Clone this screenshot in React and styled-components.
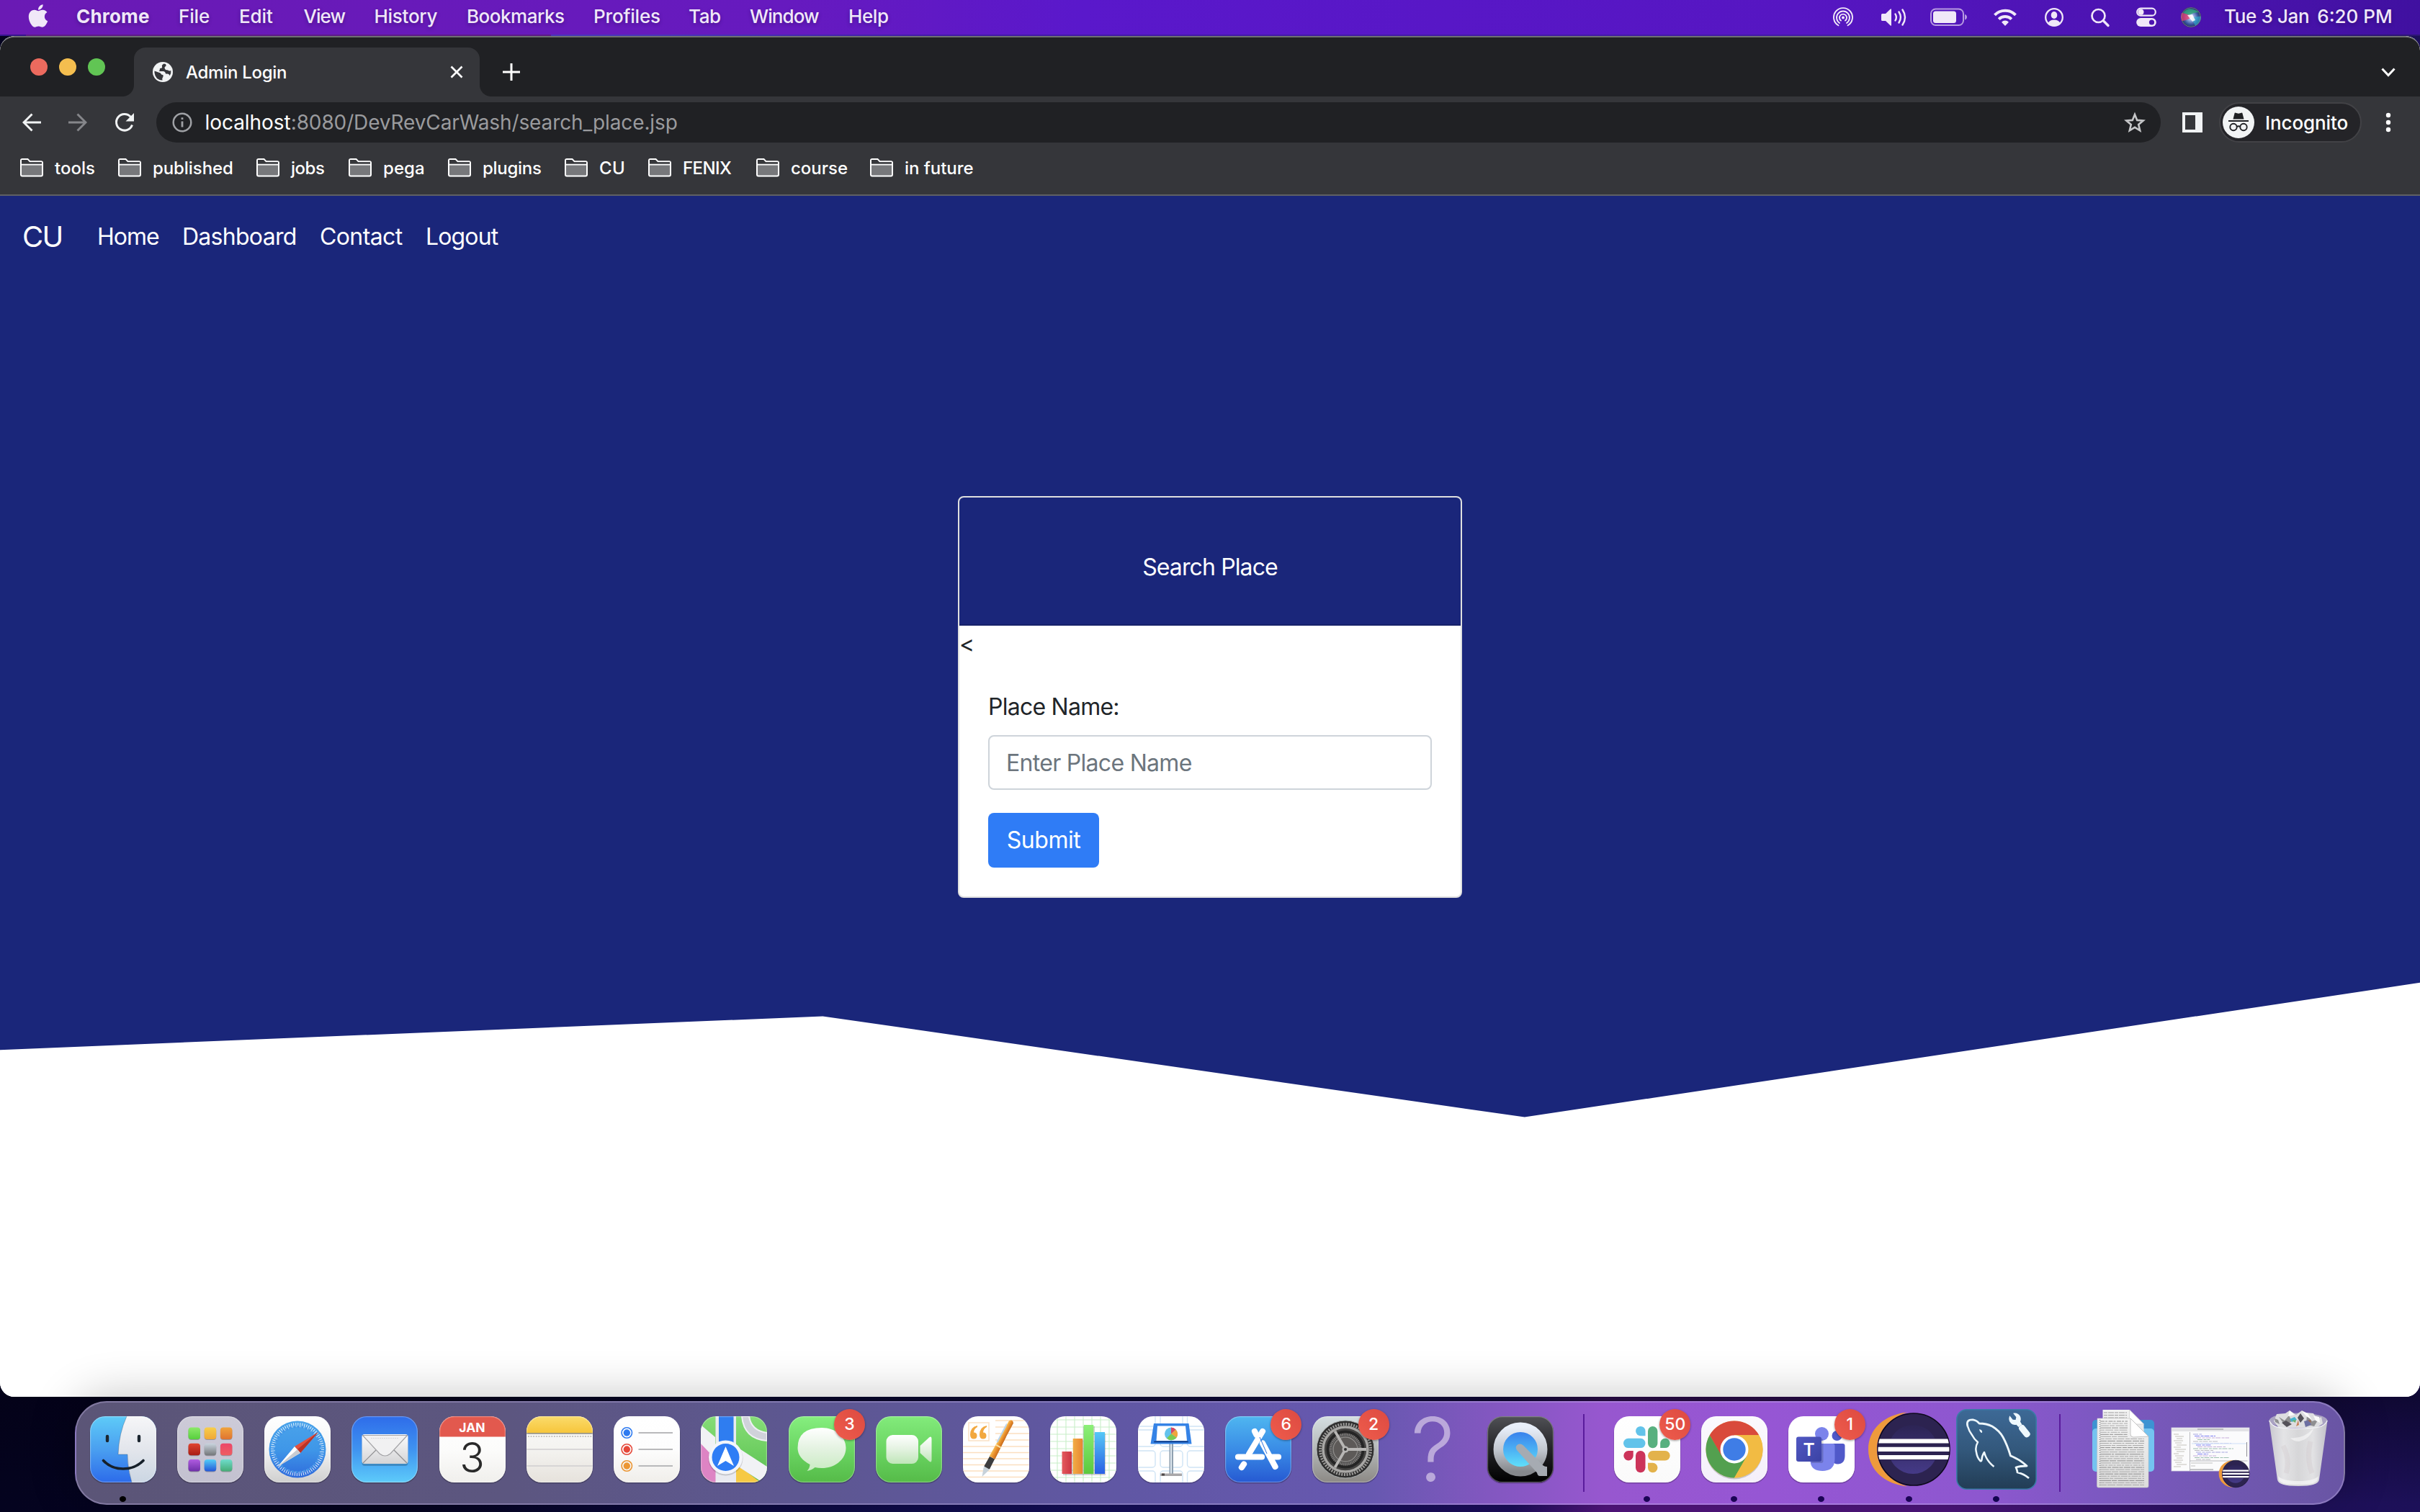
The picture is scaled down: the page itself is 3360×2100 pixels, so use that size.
import React from "react";
import styled, { createGlobalStyle } from "styled-components";
import { FaApple } from "react-icons/fa";

const GlobalStyle = createGlobalStyle`
  *, *::before, *::after { box-sizing: border-box; }
  html, body { margin: 0; padding: 0; }
  body {
    width: 3360px;
    height: 2100px;
    overflow: hidden;
    font-family: Inter, "Liberation Sans", sans-serif;
  }
`;

/* ---------- desktop ---------- */

const Desktop = styled.div`
  width: 3360px;
  height: 2100px;
  display: flex;
  flex-direction: column;
  background:
    linear-gradient(180deg, rgba(0, 0, 0, 0) 1890px, rgba(4, 2, 20, 0.55) 1940px, rgba(4, 2, 20, 0) 2090px),
    linear-gradient(90deg, #04031f 0, #05041f 560px, #0a0838 900px, #140f58 1500px, #1c0e5c 2100px, #53157f 2230px, #4d157c 2700px, #34126c 2950px, #1f105a 3200px, #1c1058 100%);
`;

const Text = styled.span`
  white-space: pre;
  letter-spacing: ${(p) => p.$ls || 0}px;
`;

/* ---------- menu bar ---------- */

const MenuBar = styled.header`
  height: 48px;
  flex: none;
  display: flex;
  justify-content: space-between;
  color: #f0e8f8;
  font-size: 26px;
  font-weight: 500;
  line-height: 45px;
  background: linear-gradient(90deg, #6a1ab4 0, #661abf 1100px, #5a18cb 1500px, #5616c2 2500px, #4612a8 3200px, #4010a0 100%);
  text-shadow: 0 2px 5px rgba(20, 0, 60, 0.35);
`;

const MenuGroup = styled.div`
  display: flex;
`;

const AppleSlot = styled.div`
  width: 106px;
  padding: 4px 0 0 35px;
  font-size: 36px;
  line-height: 0;
`;

const MenuItem = styled.div`
  width: ${(p) => p.$w}px;
  font-weight: ${(p) => (p.$strong ? 700 : 500)};
`;

const StatusItem = styled.div`
  width: ${(p) => p.$w}px;
  height: 48px;
  display: flex;
  align-items: center;
`;

const ClockItem = styled.div`
  width: 272px;
  display: flex;
  gap: 11px;
`;

const WindowGap = styled.div`
  height: 2px;
  flex: none;
  background: linear-gradient(90deg, #35158a 0 36px, #5d1c86 36px 765px, #4a35b8 765px 900px, #431aa6 1300px 2600px, #2c1672 100%);
`;

/* ---------- browser ---------- */

const BrowserWindow = styled.main`
  height: 1890px;
  flex: none;
  display: flex;
  flex-direction: column;
  border-radius: 20px;
  overflow: hidden;
  background: #fff;
`;

const TabStrip = styled.div`
  height: 84px;
  flex: none;
  display: flex;
  align-items: flex-end;
  border-top: 2px solid #6f7073;
  border-radius: 20px 20px 0 0;
  background: #202124;
`;

const TrafficLights = styled.div`
  width: 186px;
  height: 84px;
  padding: 31px 0 0 42px;
  display: flex;
  gap: 16px;
`;

const Light = styled.span`
  width: 24px;
  height: 24px;
  border-radius: 50%;
  background: ${(p) => p.$c};
`;

const Tab = styled.div`
  position: relative;
  width: 480px;
  height: 68px;
  padding: 0 22px 0 26px;
  display: flex;
  align-items: center;
  border-radius: 16px 16px 0 0;
  background: #35363a;
  color: #fff;
  font-size: 24px;

  &::before,
  &::after {
    content: "";
    position: absolute;
    bottom: 0;
    width: 16px;
    height: 16px;
  }
  &::before {
    left: -16px;
    background: radial-gradient(circle at 0 0, transparent 15.5px, #35363a 16.5px);
  }
  &::after {
    right: -16px;
    background: radial-gradient(circle at 100% 0, transparent 15.5px, #35363a 16.5px);
  }
`;

const TabTitle = styled.div`
  flex: 1;
  padding-left: 18px;
  font-weight: 500;
`;

const NewTab = styled.div`
  height: 68px;
  padding-left: 32px;
  flex: 1;
  display: flex;
  align-items: center;
`;

const TabSearch = styled.div`
  width: 54px;
  height: 68px;
  display: flex;
  align-items: center;
`;

const Toolbar = styled.div`
  height: 72px;
  flex: none;
  padding-top: 8px;
  display: flex;
  align-items: flex-start;
  background: #35363a;
  color: #fff;
`;

const NavButton = styled.div`
  width: ${(p) => p.$w}px;
  height: 56px;
  padding-left: ${(p) => p.$inset || 0}px;
  display: flex;
  align-items: center;
`;

const Omnibox = styled.div`
  width: 2783px;
  height: 56px;
  padding: 0 21px 0 22px;
  display: flex;
  align-items: center;
  border-radius: 28px;
  background: #202124;
  font-size: 28px;
`;

const Url = styled.div`
  flex: 1;
  padding-left: 17.5px;
  color: #9a9b9e;
`;

const Host = styled(Text)`
  color: #fff;
`;

const SidePanelSlot = styled.div`
  width: 81px;
  height: 56px;
  padding-left: 30px;
  display: flex;
  align-items: center;
`;

const IncognitoPill = styled.div`
  width: 198px;
  height: 56px;
  padding-left: 3px;
  display: flex;
  align-items: center;
  gap: 15px;
  border: 2px solid #424246;
  border-radius: 28px;
  background: #242428;
  font-size: 26px;
  font-weight: 500;
`;

const MoreSlot = styled.div`
  height: 56px;
  padding-left: 33px;
  display: flex;
  align-items: center;
`;

const BookmarksBar = styled.div`
  height: 66px;
  flex: none;
  padding: 0 0 10px 28px;
  display: flex;
  align-items: center;
  border-bottom: 2px solid #5f6064;
  background: #35363a;
  color: #fff;
  font-size: 24px;
  font-weight: 500;
`;

const Bookmark = styled.div`
  width: ${(p) => p.$w}px;
  display: flex;
  align-items: center;
  gap: 16px;
`;

/* ---------- page ---------- */

const Page = styled.div`
  flex: 1;
  background: #fff;
  font-size: 32px;
  font-weight: 430;
  line-height: 48px;
  color: #212529;
`;

const NavBar = styled.nav`
  height: 112px;
  padding: 2px 0 0 31px;
  display: flex;
  align-items: center;
  background: #1a267a;
  color: #fff;
`;

const Brand = styled.div`
  width: 104px;
  font-size: 40px;
`;

const NavLink = styled.div`
  width: ${(p) => p.$w}px;
`;

const Hero = styled.section`
  height: 1167.6px;
  display: flex;
  align-items: center;
  justify-content: center;
  background: #1a267a;
  clip-path: polygon(0 0, 100% 0, 100% 84%, 63% 100%, 34% 88%, 0 92%);
`;

const Card = styled.div`
  width: 700px;
  height: 558px;
  border: 2px solid #dfdfdf;
  border-radius: 8px;
  background: #fff;
  overflow: hidden;
`;

const CardHeader = styled.div`
  height: 178px;
  padding-top: 73px;
  border-bottom: 2px solid #172269;
  background: #1a267a;
  color: #fff;
  text-align: center;
`;

const Stray = styled.div`
  height: 48px;
  padding-top: 2px;
`;

const CardBody = styled.div`
  padding: 40px;
`;

const Label = styled.label`
  display: block;
  padding-top: 1px;
  margin-bottom: 15px;
`;

const Field = styled.div`
  height: 76px;
  padding: 13px 23px;
  border: 2px solid #ced4da;
  border-radius: 8px;
  color: #6c757d;
`;

const SubmitButton = styled.button`
  display: block;
  width: 154px;
  height: 76px;
  margin-top: 32px;
  padding: 1px 0 0;
  border: 0;
  border-radius: 8px;
  background: #2f7cf6;
  color: #fff;
  font: inherit;
`;

/* ---------- dock ---------- */

const DockBar = styled.footer`
  width: 3152px;
  height: 144px;
  flex: none;
  margin: 6px 0 0 104px;
  padding-left: 4px;
  display: flex;
  border: 2px solid rgba(205, 190, 240, 0.34);
  border-radius: 44px;
  background:
    linear-gradient(90deg, #5b5577 0, #5c5680 600px, #5d5791 1000px, #6057a4 1450px, #6758b0 1800px, #8257c0 1960px, #9757cf 2120px, #9656d4 2350px, #8d57cf 2650px, #7d58c2 2800px, #7057b0 3000px, #6955a4 100%);
  box-shadow: 0 -6px 64px rgba(0, 0, 0, 0.24);
`;

const Tile = styled.div`
  position: relative;
  width: 121.25px;
  height: 130px;
  padding-top: ${(p) => Math.max(p.$dy || 0, 0) * 2}px;
  padding-bottom: ${(p) => Math.max(-(p.$dy || 0), 0) * 2}px;
  flex: none;
  display: flex;
  align-items: center;
  justify-content: center;

  svg { overflow: visible; flex: none; }
`;

const RunningDot = styled.span`
  position: absolute;
  left: 55.5px;
  bottom: -8px;
  width: 9px;
  height: 8px;
  border-radius: 50%;
  background: ${(p) => p.$c};
`;

const Badge = styled.span`
  position: absolute;
  left: 78px;
  top: 9px;
  width: 43px;
  height: 43px;
  border-radius: 50%;
  background: linear-gradient(45deg, #ee5c4c, #dd4a41);
  box-shadow: 0 1px 3px rgba(0, 0, 0, 0.4);
  color: #fff;
  font-size: 23px;
  font-weight: 500;
  line-height: 43px;
  text-align: center;
`;

const Missing = styled.span`
  color: rgba(214, 200, 232, 0.72);
  font-size: 122px;
  font-weight: 300;
  line-height: 130px;
`;

const Separator = styled.div`
  width: 55px;
  height: 108px;
  margin-top: 16px;
  flex: none;
  display: flex;
  justify-content: center;

  &::before {
    content: "";
    width: 2px;
    height: 108px;
    background: #5a1c9c;
  }
`;

/* ---------- status icons ---------- */

const AirDrop = () => (
  <svg width="28" height="28" viewBox="0 0 28 28" fill="none" stroke="#f0e8f8" strokeWidth="1.9" strokeLinecap="round">
    <circle cx="14" cy="14.5" r="2" fill="#f0e8f8" stroke="none" />
    <path d="M11 18.6a5 5 0 1 1 6 0" />
    <path d="M9 22a9 9 0 1 1 10 0" />
    <path d="M7.4 25.3a13 13 0 1 1 13.2 0" />
  </svg>
);

const Volume = () => (
  <svg width="38" height="28" viewBox="0 0 38 28" fill="none" stroke="#f0e8f8" strokeWidth="2.4" strokeLinecap="round">
    <path d="M1 10.5q0-1.5 1.5-1.5H7l6.5-6.2q1.5-1.3 1.5.7v21q0 2-1.5.7L7 19H2.5Q1 19 1 17.5z" fill="#f0e8f8" stroke="none" />
    <path d="M20.5 9.5q2.7 4.500 0 9M25.5 6.500q4.800 7.500 0 15M30.500 3.500q7 10.500 0 21" />
  </svg>
);

const Battery = () => (
  <svg width="52" height="26" viewBox="0 0 52 26">
    <rect x="1" y="1.5" width="45" height="22.5" rx="6.5" fill="none" stroke="#b79be0" strokeWidth="2" />
    <rect x="4" y="4.5" width="32" height="16.5" rx="3.5" fill="#f0e8f8" />
    <path d="M48 9q3 1 3 3.8t-3 3.8z" fill="#b79be0" />
  </svg>
);

const Wifi = () => (
  <svg width="34" height="26" viewBox="0 0 34 26" fill="none" stroke="#f0e8f8" strokeWidth="4">
    <path d="M2.5 9.8a20.5 20.5 0 0 1 29 0" />
    <path d="M8.2 15.6a12.5 12.5 0 0 1 17.6 0" />
    <path d="M12 19.7a7 7 0 0 1 10 0L17 25z" fill="#f0e8f8" stroke="none" />
  </svg>
);

const UserCircle = () => (
  <svg width="28" height="28" viewBox="0 0 28 28">
    <circle cx="14" cy="14" r="11.8" fill="none" stroke="#f0e8f8" strokeWidth="2.3" />
    <ellipse cx="14" cy="11" rx="4.3" ry="5" fill="#f0e8f8" />
    <path d="M5.8 22q1.7-4.5 8.2-4.5t8.2 4.5A11.5 11.5 0 0 1 5.8 22z" fill="#f0e8f8" />
  </svg>
);

const Search = () => (
  <svg width="27" height="27" viewBox="0 0 27 27" fill="none" stroke="#f0e8f8" strokeWidth="2.7" strokeLinecap="round">
    <circle cx="10.5" cy="11" r="9" />
    <path d="M17.300 17.800L24 24.500" strokeWidth="3.4" />
  </svg>
);

const ControlCenter = () => (
  <svg width="30" height="28" viewBox="0 0 30 28">
    <rect x="2.2" y="1.7" width="25.6" height="10" rx="5" fill="none" stroke="#f0e8f8" strokeWidth="2.2" />
    <circle cx="7.5" cy="6.7" r="4" fill="#f0e8f8" />
    <rect x="1.2" y="15" width="27.6" height="12" rx="6" fill="#f0e8f8" />
    <circle cx="22.5" cy="21" r="3.6" fill="#4c13b0" />
  </svg>
);

const Siri = () => (
  <svg width="30" height="30" viewBox="0 0 30 30">
    <defs>
      <radialGradient id="siri" cx="50%" cy="50%" r="55%">
        <stop offset="0" stopColor="#fff" /><stop offset=".25" stopColor="#9fb4e6" />
        <stop offset=".65" stopColor="#33509c" /><stop offset="1" stopColor="#2a2d3a" />
      </radialGradient>
      <clipPath id="siri-c"><circle cx="15" cy="15" r="14" /></clipPath>
    </defs>
    <circle cx="15" cy="15" r="14" fill="url(#siri)" />
    <g clipPath="url(#siri-c)">
      <path d="M0 9Q10 8 16 15 8 20 2 20z" fill="#e8396e" opacity=".75" />
      <path d="M4 9Q12 -2 26 8 18 8 13 12z" fill="#2fa877" opacity=".8" />
      <path d="M16 16q8-3 14-2-1 8-9 13z" fill="#2fb3d0" opacity=".6" />
      <path d="M10 12l7-1 4 8-4 2z" fill="#fff" opacity=".85" />
    </g>
    <circle cx="15" cy="15" r="13.4" fill="none" stroke="#8a8fa0" strokeOpacity=".6" />
  </svg>
);

/* ---------- browser icons ---------- */

const Globe = () => (
  <svg width="28" height="28" viewBox="0 0 28 28">
    <circle cx="14" cy="14" r="14" fill="#f1f3f4" />
    <path d="M2.5 12.5L8 14.500q3 .5 3.500 2t3 1.500v2.500q-1.500 1.500-1 5Q3.500 25 2.500 15zM15.500 2.600Q12 4.500 13 6.500t-3 2.500q0 3-1.500 4h6q3 0 3.500 3.500h2.500q2.500 0 3 2.800Q26 15.500 25.300 12q-2.500 1.200-4-.5-4 0-4.600-2.500t1.600-3q.7-1.700-.3-3z" fill="#35363a" />
  </svg>
);

const Close = () => (
  <svg width="20" height="20" viewBox="0 0 20 20" stroke="#fff" strokeWidth="2.7"><path d="M2.500 2.500l15 15M17.500 2.500l-15 15" /></svg>
);

const Plus = () => (
  <svg width="24" height="24" viewBox="0 0 24 24" stroke="#fff" strokeWidth="3"><path d="M12 0v24M0 12h24" /></svg>
);

const Chevron = () => (
  <svg width="20" height="13" viewBox="0 0 20 13" fill="none" stroke="#fff" strokeWidth="3"><path d="M1.500 1.500L10 10.500l8.500-9" /></svg>
);

const ArrowLeft = () => (
  <svg width="26" height="26" viewBox="0 0 26 26" fill="none" stroke="#f1f3f4" strokeWidth="2.9"><path d="M26 13H2.500M13.500 1.500L2 13l11.500 11.500" /></svg>
);

const ArrowRight = () => (
  <svg width="26" height="26" viewBox="0 0 26 26" fill="none" stroke="#85868a" strokeWidth="2.9"><path d="M0 13h23.500M12.500 1.500L24 13 12.500 24.500" /></svg>
);

const Reload = () => (
  <svg width="28" height="28" viewBox="0 0 28 28" fill="none" stroke="#f1f3f4" strokeWidth="3">
    <path d="M24.500 17.500A11.300 11.300 0 1 1 22.300 6.300" /><path d="M27 1v11.500H15.500z" fill="#f1f3f4" stroke="none" />
  </svg>
);

const Info = () => (
  <svg width="28" height="28" viewBox="0 0 28 28" fill="none" stroke="#9fa1a5" strokeWidth="2.5">
    <circle cx="14" cy="14" r="12.3" /><path d="M14 12.500v8M14 7.200v2.800" strokeWidth="2.8" />
  </svg>
);

const Star = () => (
  <svg width="30" height="30" viewBox="0 0 30 30" fill="none" stroke="#c6c7c9" strokeWidth="2.6">
    <path d="M15 4l3.200 7.900 8.500.6-6.500 5.500 2 8.300L15 21.800l-7.200 4.500 2-8.300-6.500-5.500 8.500-.6z" />
  </svg>
);

const SidePanel = () => (
  <svg width="28" height="28" viewBox="0 0 28 28"><path d="M0 0h28v28H0zM4 4v20h14V4z" fill="#f1f3f4" fillRule="evenodd" /></svg>
);

const IncognitoIcon = () => (
  <svg width="44" height="44" viewBox="0 0 44 44">
    <circle cx="22" cy="22" r="22" fill="#f1f3f4" />
    <path d="M14.500 17.500l2-8q.3-1.200 1.500-.8l4 1 4-1q1.200-.4 1.500.8l2 8zM8 19h28v1.900H8z" fill="#202124" />
    <g fill="none" stroke="#202124" strokeWidth="1.9"><circle cx="15" cy="28.500" r="4.700" /><circle cx="29" cy="28.500" r="4.700" /><path d="M19.700 28q2.300-1.500 4.600 0" /></g>
  </svg>
);

const Dots = () => (
  <svg width="8" height="28" viewBox="0 0 8 28" fill="#fff"><circle cx="4" cy="4" r="3.200" /><circle cx="4" cy="14" r="3.200" /><circle cx="4" cy="24" r="3.200" /></svg>
);

const Folder = () => (
  <svg width="32" height="26" viewBox="0 0 32 26">
    <path d="M1 22.500V3Q1 1 3 1h7.500l3 3.200H29q2 0 2 2v16.300q0 2-2 2H3q-2 0-2-2z" fill="#77787b" stroke="#fff" strokeWidth="2" />
    <path d="M2 2h8l3 3.200h17v2.600H2z" fill="#35363a" /><path d="M1 8.600h30" stroke="#fff" strokeWidth="1.800" />
  </svg>
);

/* ---------- dock icons (92 unit squares) ---------- */

const Grad = ({ id, stops, x2 = 0, y2 = 1 }) => (
  <linearGradient id={id} x1="0" y1="0" x2={x2} y2={y2}>
    {stops.map((c, i) => <stop key={i} offset={i / (stops.length - 1)} stopColor={c} />)}
  </linearGradient>
);

const AppIcon = ({ id, stops, children }) => (
  <svg width="92" height="92" viewBox="0 0 92 92">
    <defs>
      <Grad id={`${id}-bg`} stops={stops} />
      <clipPath id={`${id}-clip`}><rect width="92" height="92" rx="21" /></clipPath>
    </defs>
    <rect y="1.5" x="-.5" width="93" height="92" rx="21" fill="#000" opacity=".22" />
    <g clipPath={`url(#${id}-clip)`}>
      <rect width="92" height="92" fill={`url(#${id}-bg)`} />
      {children}
    </g>
    <rect x=".6" y=".6" width="90.8" height="90.8" rx="20.5" fill="none" stroke="#fff" strokeOpacity=".28" strokeWidth="1.2" />
  </svg>
);

const Finder = () => (
  <AppIcon id="finder" stops={["#5ecbf8", "#4a9ff0", "#2c6bea"]}>
    <defs><Grad id="finder-r" stops={["#f6f6f8", "#e3e6ec", "#cbd6e3"]} /></defs>
    <path d="M51 0Q40 24 39 53h13q0 20 6 39h34V0z" fill="url(#finder-r)" />
    <path d="M51 0Q40 24 39 53h13q0 20 6 39" fill="none" stroke="#33506c" strokeOpacity=".35" />
    <path d="M24 28v6M68 28v6" stroke="#1c2630" strokeWidth="4.4" strokeLinecap="round" />
    <path d="M18.500 61.500Q29 73 46 73t28-11.500" fill="none" stroke="#16202a" strokeWidth="3.6" strokeLinecap="round" />
  </AppIcon>
);

const padColors = [
  ["#8ce96a", "#57cf3d"], ["#f7ce4b", "#f0a838"], ["#f0a33c", "#df7430"],
  ["#e0442f", "#a81d15"], ["#c9d4de", "#737679"], ["#ec4668", "#ee5d62"],
  ["#b05ce0", "#6d2fa8"], ["#54cdf7", "#2356d8"], ["#6fdccb", "#46ab76"],
];

const Launchpad = () => (
  <AppIcon id="pad" stops={["#cdcbd8", "#c3c1d0"]}>
    <defs>{padColors.map((c, i) => <Grad key={i} id={`pad${i}`} stops={c} />)}</defs>
    {padColors.map((c, i) => (
      <g key={i}>
        <rect x={15.5 + (i % 3) * 22.2} y={16.5 + Math.floor(i / 3) * 22.3} width="16.5" height="16.5" rx="4" fill="#000" opacity=".25" />
        <rect x={15.5 + (i % 3) * 22.2} y={15.5 + Math.floor(i / 3) * 22.3} width="16.5" height="16.5" rx="4" fill={`url(#pad${i})`} />
      </g>
    ))}
  </AppIcon>
);

const Safari = () => (
  <AppIcon id="safari" stops={["#ffffff", "#f4f4f4", "#cfcfcf"]}>
    <defs><Grad id="safari-d" stops={["#4aa3ea", "#3f97e8", "#2f6bdc"]} /></defs>
    <circle cx="46" cy="46" r="39.5" fill="url(#safari-d)" />
    <circle cx="46" cy="46" r="34" fill="none" stroke="#fff" strokeOpacity=".8" strokeWidth="6" strokeDasharray="1.060 1.907" />
    <circle cx="46" cy="46" r="31.5" fill="none" stroke="#3f93e6" strokeWidth="3" strokeDasharray="2.800 2.697" />
    <path d="M75 22L50 51l-8-9z" fill="#e2503f" /><path d="M75 22L50 51l-4-5z" fill="#b93327" />
    <path d="M18.500 70L42 42l8 9z" fill="#fff" /><path d="M18.500 70L46 46l4 5z" fill="#c9ccd1" />
  </AppIcon>
);

const Mail = () => (
  <AppIcon id="mail" stops={["#2e6cea", "#3f93f0", "#5dcbfa"]}>
    <defs><Grad id="mail-e" stops={["#fdfdfd", "#d4d4d6"]} /></defs>
    <rect x="14.5" y="28" width="64" height="41" rx="4" fill="#000" opacity=".2" />
    <rect x="14.5" y="25" width="64" height="41" rx="3.5" fill="url(#mail-e)" />
    <path d="M16 65l18-18M77 65L59 47" stroke="#8f8f92" strokeWidth="1.2" />
    <path d="M15.500 26.500L39 52q7.500 6 15 0l23.500-25.500z" fill="#f1f1f2" stroke="#a3a3a6" strokeWidth="1.2" />
    <path d="M27 30.500h38" stroke="#d8d8da" strokeDasharray="2 1" />
  </AppIcon>
);

const IconText = styled.text`
  font-family: Inter, "Liberation Sans", sans-serif;
  font-size: ${(p) => p.$size}px;
  font-weight: ${(p) => p.$weight};
  text-anchor: middle;
`;

const Calendar = () => (
  <AppIcon id="cal" stops={["#ffffff", "#fcfcfb", "#f0efec"]}>
    <rect width="92" height="28.5" fill="#e2594e" />
    <IconText x="45.5" y="22" $size={17.5} $weight={700} fill="#fff">JAN</IconText>
    <IconText x="45.5" y="78" $size={57} $weight={300} fill="#2a2a2a">3</IconText>
  </AppIcon>
);

const Notes = () => (
  <AppIcon id="notes" stops={["#fafafa", "#f4f3f0", "#e6e2dc"]}>
    <defs><Grad id="notes-y" stops={["#fadb6c", "#f7c63b"]} /></defs>
    <rect width="92" height="23" fill="url(#notes-y)" /><rect y="23" width="92" height="1.8" fill="#9b9686" />
    <path d="M2 28h90" stroke="#c4c2bd" strokeWidth="2" strokeDasharray="1.8 1.8" />
    <path d="M0 46h92M0 69h92" stroke="#cfcecf" strokeWidth="1.6" />
  </AppIcon>
);

const Reminders = () => (
  <AppIcon id="rem" stops={["#ffffff", "#fdfdfd", "#f0eeea"]}>
    {[["#2f7bf0", 23], ["#e5483a", 46], ["#eb9634", 69]].map(([c, y]) => (
      <g key={y}>
        <circle cx="18.3" cy={y} r="7.2" fill="none" stroke={c} strokeWidth="1.6" /><circle cx="18.3" cy={y} r="4.7" fill={c} />
        <path d={`M34.500 ${y}h47.500`} stroke="#b9b9bb" strokeWidth="1.8" />
      </g>
    ))}
  </AppIcon>
);

const Maps = () => (
  <AppIcon id="maps" stops={["#86dd78", "#6fcf62", "#5cbd55"]}>
    <path d="M0 36l24 20v36H0z" fill="#dd84c4" />
    <path d="M49 66l34 26H49z" fill="#f6c944" />
    <path d="M0 12l20 17v30L0 38zM46 40l46 30v10q0 8-6 12L49 68z" fill="#f1f2f5" />
    <path d="M20.500 0H49v92H20.500z" fill="#e9eaf0" />
    <path d="M25 0h20.500v50H25z" fill="#2f7df0" />
    <path d="M57 0q3 32 35 34v-11Q70 20 67 0z" fill="#d0d2da" stroke="#eff0f4" strokeWidth="2" />
    <circle cx="34.5" cy="58.5" r="24" fill="#000" opacity=".15" />
    <circle cx="34.5" cy="57" r="23.5" fill="#f3f5fa" /><circle cx="34.5" cy="57" r="19" fill="#2f7df5" />
    <path d="M34.500 42L46 69l-11.500-7L23 69z" fill="#fff" />
  </AppIcon>
);

const Messages = () => (
  <AppIcon id="msg" stops={["#86ef7f", "#6bd563", "#55bb48"]}>
    <defs><Grad id="msg-b" stops={["#ffffff", "#e3f2e0", "#c9ebc2"]} /></defs>
    <path d="M46 16c19 0 33.500 12.500 33.500 28S65 72 46 72q-5 0-9.500-1-4.500 4-11 5 4-4.500 4-9Q12.500 58 12.500 44 12.500 16 46 16z" fill="url(#msg-b)" />
  </AppIcon>
);

const FaceTime = () => (
  <AppIcon id="ft" stops={["#82eb7b", "#6bd563", "#55bb48"]}>
    <defs><Grad id="ft-b" stops={["#ffffff", "#e3f2e0", "#bfe6b8"]} /></defs>
    <rect x="14.5" y="26" width="44.5" height="40" rx="9" fill="url(#ft-b)" />
    <path d="M61.500 41L74 29.500q3.500-2.500 3.500 2v29q0 4.500-3.500 2L61.500 51z" fill="url(#ft-b)" />
  </AppIcon>
);

const Pages = () => (
  <AppIcon id="pages" stops={["#ffffff", "#ffffff"]}>
    <defs><Grad id="pen" x2={1} y2={0} stops={["#f7c055", "#ea8f2c", "#c86d1d"]} /></defs>
    <path d="M45 6h47M45 15h47M45 24h47M45 33h47M0 42h92M0 50.500h92M0 59h92M0 67.500h92M0 76h92M0 84.500h92" stroke="#fbdfc0" strokeWidth="1.4" />
    <rect x="8" y="9" width="28" height="25" fill="none" stroke="#fbe3c8" strokeWidth="1.6" />
    <path d="M20 13q-10 2-10 12.500 0 6 5 6 4.500 0 4.500-4.500T15 22.500Q15.500 17 20 15zM33 13q-10 2-10 12.500 0 6 5 6 4.500 0 4.500-4.500T28 22.500Q28.500 17 33 15z" fill="#f2a83f" />
    <g transform="translate(26.500 84) rotate(28)">
      <path d="M0 0l-4-12 1-4h6l1 4z" fill="#c8d2da" /><path d="M-4.300-14l.3-16h8l.3 16z" fill="#3c3c3e" />
      <path d="M-4.500-30l1-34h7l1 34z" fill="url(#pen)" /><path d="M-3.500-48h7v-38q-3.500-5-7 0z" fill="url(#pen)" />
      <path d="M-5-52V-82l2 3v27z" fill="#b9d4ec" /><path d="M-4-48h8" stroke="#fbe0a5" strokeWidth="2" />
    </g>
  </AppIcon>
);

const Numbers = () => (
  <AppIcon id="num" stops={["#ffffff", "#ffffff"]}>
    <defs>
      <Grad id="nb0" x2={1} y2={0} stops={["#e45a5e", "#cc3643"]} /><Grad id="nb1" x2={1} y2={0} stops={["#f2ad45", "#e78632"]} />
      <Grad id="nb2" stops={["#8cf078", "#5cc93d"]} /><Grad id="nb3" stops={["#55c8f7", "#2a60e4"]} />
    </defs>
    <path d="M10 0v92M22 0v92M34 0v92M46 0v92M58 0v92M70 0v92M82 0v92M0 5h92M0 15h92M0 25h92M0 35h92M0 45h92M0 55h92M0 65h92M0 75h92M0 85h92" stroke="#c8eec8" strokeWidth="1.1" />
    <path d="M18 51h14V33h14V14h16v10h15v58H18z" fill="#000" opacity=".18" />
    <rect x="16.5" y="49" width="13.5" height="31" fill="url(#nb0)" /><rect x="31.7" y="31" width="13.5" height="49" fill="url(#nb1)" />
    <rect x="46.8" y="12" width="13.5" height="68" fill="url(#nb2)" /><rect x="62" y="22" width="14" height="58" fill="url(#nb3)" />
  </AppIcon>
);

const Keynote = () => (
  <AppIcon id="key" stops={["#ffffff", "#ffffff"]}>
    <g fill="none" stroke="#cfe4f5" strokeWidth="1.4">
      {[-7, 31, 68.5].map((x) => [-9, 19, 48, 76].map((y) => <rect key={`${x}${y}`} x={x} y={y} width="31" height="23" rx="4" />))}
    </g>
    <rect x="43.5" y="36" width="5.5" height="45" fill="#8fa0b0" /><rect x="45" y="36" width="2" height="45" fill="#dde6ee" />
    <path d="M31 79.500h30v3.500H31z" fill="#a9a7a9" /><path d="M33 79.500h4v3h-4z" fill="#4f4a4a" />
    <path d="M22 10h48.500l4 28.500h-57z" fill="#3583e6" /><path d="M22.500 34.500h47l.5 1.800H22z" fill="#123a80" />
    <path d="M27 13.500h39l2 20.500H25.500z" fill="#fff" />
    <circle cx="46" cy="24.5" r="9" fill="#63c2ec" /><path d="M46 24.500V15.500a9 9 0 0 1 6.500 3z" fill="#dd4760" />
    <path d="M46 24.500l6.500-6a9 9 0 0 1 1 11.500z" fill="#f0a53c" /><path d="M46 24.500l7.500 5.500a9 9 0 0 1-13.500.5z" fill="#7bcb52" />
  </AppIcon>
);

const AppStore = () => (
  <AppIcon id="store" stops={["#4fb6f0", "#3a8ce6", "#2659d2"]}>
    <g stroke="#fff" strokeWidth="8.2" strokeLinecap="round">
      <path d="M41 21l2.500 5" /><path d="M52 21L33 52.500" /><path d="M18 56.500h33M66 56.500h8" /><path d="M52 37.500L69.500 70" /><path d="M26 66.500L23 71" />
    </g>
    <path d="M48 29l10 23" stroke="#2f72dc" strokeWidth="1" />
  </AppIcon>
);

const Settings = () => (
  <AppIcon id="set" stops={["#d5dfe2", "#b4b8b8", "#8c8985"]}>
    <circle cx="46" cy="46" r="40" fill="#2e2e2e" stroke="#a9adad" strokeWidth="1" />
    <circle cx="46" cy="46" r="35" fill="none" stroke="#9c9b99" strokeWidth="4" strokeDasharray="2 1.665" />
    <circle cx="46" cy="46" r="31" fill="#454443" stroke="#a8a7a5" strokeWidth="3.5" />
    <circle cx="46" cy="46" r="24.5" fill="none" stroke="#252525" strokeWidth="4" />
    <circle cx="46" cy="46" r="20.5" fill="none" stroke="#7b7978" strokeWidth="4" strokeDasharray="1.500 .9" />
    <circle cx="46" cy="46" r="17" fill="#5d5a58" stroke="#8b8987" strokeWidth="1.5" />
    <path d="M46 46h29M46 46L31.500 20.900M46 46L31.500 71.100" stroke="#b7b6b4" strokeWidth="3.8" />
    <circle cx="46" cy="46" r="4.5" fill="#b7b6b4" /><circle cx="46" cy="46" r="2" fill="#333" />
  </AppIcon>
);

const QuickTime = () => (
  <AppIcon id="qt" stops={["#505156", "#232326", "#000000"]}>
    <defs><Grad id="qt-r" stops={["#e8effa", "#c3c8d0", "#85888c"]} /><Grad id="qt-b" stops={["#3475ea", "#4bb0f4", "#66ecfb"]} /></defs>
    <circle cx="46" cy="46" r="30.7" fill="url(#qt-b)" stroke="url(#qt-r)" strokeWidth="13.5" />
    <path d="M41 47q-3-5 1-7.500t8 1L77 68q3 2.500 6 2v13H73q-3 0-4-4.500z" fill="#a6abb2" />
  </AppIcon>
);

const Slack = () => (
  <AppIcon id="slack" stops={["#ffffff", "#fafafa"]}>
    <g fill="#62c3ea"><path d="M43.500 27.300H36.800a6.700 6.700 0 1 1 6.700-6.700z" /><rect x="13" y="30.7" width="30.5" height="13.4" rx="6.7" /></g>
    <g fill="#58b07f"><rect x="47" y="14" width="13.4" height="30.2" rx="6.7" /><path d="M64.200 44.100v-6.700a6.700 6.700 0 1 1 6.700 6.700z" /></g>
    <g fill="#cc345a"><path d="M26.700 48v6.700A6.700 6.700 0 1 1 20 48z" /><rect x="30" y="48" width="13.5" height="30.3" rx="6.7" /></g>
    <g fill="#e3b24b"><rect x="47" y="48" width="30.7" height="13.4" rx="6.7" /><path d="M47 64.800h6.700a6.700 6.700 0 1 1-6.700 6.700z" /></g>
  </AppIcon>
);

const Chrome = () => (
  <AppIcon id="chr" stops={["#fbf9fd", "#f4effa"]}>
    <circle cx="46" cy="48" r="39.5" fill="#000" opacity=".18" />
    <circle cx="46" cy="46" r="39.5" fill="#f2bb43" />
    <path d="M46 46L28.500 56.200 11.800 26.200A39.500 39.500 0 0 1 80.200 26.200H46z" fill="#d94a3b" />
    <path d="M11.800 26.200A39.500 39.500 0 0 0 46 85.500L63 56 46 60 29 56z" fill="#53a04f" />
    <path d="M46 26.200h34.200A39.500 39.500 0 0 1 46 85.500L63.200 56z" fill="#f2bb43" />
    <circle cx="46" cy="46" r="19.5" fill="#fff" /><circle cx="46" cy="46" r="15.7" fill="#3f7de6" />
  </AppIcon>
);

const Teams = () => (
  <AppIcon id="teams" stops={["#ffffff", "#ffffff"]}>
    <defs><Grad id="t-sq" x2={1} stops={["#5058c2", "#3b42a4"]} /></defs>
    <circle cx="67.5" cy="27" r="7" fill="#5059c9" /><path d="M60 38h15.500q3 0 3 3v13.500Q78.500 66 69 66.500q-6 0-9-5z" fill="#5059c9" />
    <circle cx="46.5" cy="24.5" r="9.5" fill="#7b83eb" /><path d="M31 38h30.500q3 0 3 3v18q0 17-17 17T30.500 61z" fill="#7b83eb" />
    <path d="M34 31h11.500q3 0 3 3v28q0 3-3 3H32z" fill="#000" opacity=".16" />
    <rect x="11" y="28.5" width="35" height="34.5" rx="3" fill="url(#t-sq)" />
    <IconText x="28.5" y="54.5" $size={24.5} $weight={600} fill="#fff">T</IconText>
  </AppIcon>
);

const EclipseMark = ({ id, width, height }) => (
  <svg width={width} height={height} viewBox="0 0 114 104">
    <defs>
      <clipPath id={id}><circle cx="63" cy="52" r="49.5" /></clipPath>
      <Grad id={`${id}-g`} stops={["#2c2454", "#453a87"]} />
    </defs>
    <path d="M54 .5C22 4 0 24 0 52s22 48 54 51.500C28 95 12 76 12 52S28 9 54 .5z" fill="#ee9a3c" />
    <circle cx="63" cy="52" r="50" fill="#2c2350" stroke="#0d0a1c" strokeWidth="1.6" />
    <circle cx="62" cy="52" r="34" fill={`url(#${id}-g)`} />
    <g clipPath={`url(#${id})`}>
      <path d="M12 37h102v30H12z" fill="#2c2350" />
      <path d="M12 40.500h102M12 51.800h102M12 63h102" stroke="#fff" strokeWidth="6.2" />
    </g>
  </svg>
);

const MySql = () => (
  <svg width="112" height="112" viewBox="0 0 112 112">
    <defs><Grad id="sql" stops={["#3d6996", "#33587c", "#223d55"]} /></defs>
    <rect x=".8" y=".8" width="110.4" height="110.4" rx="14" fill="url(#sql)" stroke="#3a7ca8" strokeWidth="1.6" />
    <path d="M16 24q-3-10 8-9 5 1 8 5 10 0 18 4 10 6 15 15 6 11 10.500 26 13 5 22.500 14-9 0-15 2 2 5 2 7 9 2 16 8" fill="none" stroke="#eef8fd" strokeWidth="2.8" strokeLinejoin="round" />
    <path d="M16 24q2 7 6 12 3 6 8 10-4 7-2 14 1 7 5 11.500 2 2 2.500-1 0-5 3.500-10.500 3 12 13.500 20" fill="none" stroke="#eef8fd" strokeWidth="2.5" strokeLinejoin="round" />
    <path d="M32 28q5 1 4 5-3 0-4-5z" fill="#eef8fd" />
    <g transform="translate(81 13) rotate(-38)">
      <path d="M-3-7v7l3 2.500L3 0v-7q6 3 5 9.500-1 4-4.500 6L3 13h-6l-.5-4.500Q-7 7-8 2.500-9-4-3-7z" fill="#eef8fd" />
      <rect x="-4.5" y="13" width="9" height="19" rx="4" fill="#eef8fd" />
    </g>
  </svg>
);

const Downloads = () => (
  <svg width="88" height="112" viewBox="0 0 88 112">
    <defs><Grad id="paper" stops={["#f3f3f3", "#dcdcdc"]} /></defs>
    <rect x="1" y="15" width="86" height="40" rx="5" fill="#3d93d2" /><rect x="1" y="27" width="86" height="60" rx="5" fill="#74c3f0" />
    <path d="M15.500 1h37l20 20v40h-57z" fill="url(#paper)" /><path d="M17 5h32M17 8.500h32M17 12h32" stroke="#9d9d9d" strokeDasharray="5 1 8 1" />
    <path d="M52.500 1v20h20z" fill="#fff" stroke="#cfcfcf" strokeWidth=".8" />
    <path d="M8 13h46l25 25v69q0 2-2 2H9.500q-2 0-2-2z" fill="url(#paper)" stroke="#c2c2c2" strokeWidth=".6" />
    {Array.from({ length: 30 }, (_, i) => (
      <path key={i} d={`M12 ${17 + i * 3.05}h${i < 8 ? 38 : 61}`} stroke={i % 3 ? "#a8a8a8" : "#8c8c8c"} strokeWidth="1" strokeDasharray={`${6 + (i % 4) * 3} 1 ${3 + (i % 5) * 2} 1.500`} />
    ))}
    <path d="M11.500 15v91" stroke="#8a8a8a" strokeWidth="1.5" strokeDasharray="1 2" />
    <path d="M54 13v22q0 4 4 4l21-1z" fill="#fff" stroke="#b6b6b6" strokeWidth=".8" />
  </svg>
);

const codeColors = ["#8f8fd8", "#5a5af0", "#b79ad0", "#86b09c", "#a9a9b2"];

const EditorThumb = () => (
  <svg width="108" height="84" viewBox="0 0 108 84">
    <rect width="108" height="60" fill="#fbfbfc" stroke="#d5d2e2" strokeWidth=".8" />
    <path d="M0 3h108" stroke="#e2e2e6" strokeWidth="4" /><path d="M36 2h36" stroke="#8c8c92" strokeWidth="1" />
    <path d="M25.500 6v54M25.500 46h80" stroke="#a9a9ae" strokeWidth=".8" /><path d="M104.500 20v20" stroke="#8e8e94" />
    {Array.from({ length: 16 }, (_, i) => <path key={i} d={`M${3 + (i % 3) * 2} ${9 + i * 3}h${7 + (i * 5) % 9}`} stroke="#bdbbb4" strokeWidth=".9" />)}
    {Array.from({ length: 15 }, (_, i) => <path key={i} d={`M${30 + (i % 4) * 2} ${9 + i * 2.5}h${12 + (i * 17) % 46}`} stroke={codeColors[i % 5]} strokeWidth=".8" strokeDasharray="7 1.500 4 1" />)}
    <path d="M28 22h76" stroke="#dbe8fa" strokeWidth="2" opacity=".7" /><path d="M27 49h30M27 53h6" stroke="#b9b9b9" strokeWidth=".9" /><path d="M26 58h32" stroke="#8e8e94" strokeWidth="1" />
    <g transform="translate(65.500 44.500)"><EclipseMark id="ecl2" width={43} height={39} /></g>
  </svg>
);

const Trash = () => (
  <svg width="82" height="106" viewBox="0 0 82 106">
    <defs><Grad id="can" x2={1} y2={0} stops={["#c9c8cf", "#e4e4e6", "#d6d6d8", "#e2e2e4", "#c2c1c9"]} /></defs>
    <ellipse cx="41" cy="15" rx="40.5" ry="10.5" fill="#aaa3c2" />
    <path d="M7 16l4-10 12-1 6-4 9 6 8-6 6 3 10 1 5 8 6-3 2 9-8 6H14z" fill="#dddde0" />
    <path d="M14 10l8 5 6-7 4 8-9 6zM53 7l7 9 9-3-6 10-11-3zM8 12l5 2 2 6-6-3z" fill="#8f8f91" /><path d="M18 18l6-3 8 5-7 4zM44 5l5 7-5 6-4-7z" fill="#55525a" />
    <path d="M29 13l7-3 3 4-7 3z" fill="#46b4cf" /><path d="M32 15l6-1-1 4z" fill="#6cb36f" /><path d="M41 14l1 7-4 2z" fill="#c98058" /><path d="M49 16l7-2 3 7-8 3z" fill="#6d6fa2" /><path d="M54 15l4-1 1 4z" fill="#9c6a50" />
    <path d="M29 1l7 6-9 2zM46 2l8 3 6 9-8-5zM62 8l8 2 1 8-6-3z" fill="#fafafa" />
    <path d="M.5 15Q4 24 20 25.500t40 0Q78 24 81.500 15L70 97q-1 9-29 9t-29-9z" fill="url(#can)" />
    <path d="M.8 15Q4 24 20 25.500t40 0Q78 24 81.200 15" fill="none" stroke="#f0f0f3" strokeWidth="1.3" />
    <path d="M30 39q18 2 32-13-4 14-20 18-8 0-12-5z" fill="#fff" opacity=".5" />
    <path d="M13 92q6 7 28 7t28-7l-1 5q-2 7-27 7t-27-7z" fill="#fff" opacity=".55" />
    <path d="M20 50q10 20 4 38M58 44q-6 22 2 44" stroke="#cbbfc2" strokeWidth="7" opacity=".25" fill="none" />
  </svg>
);

/* ---------- data ---------- */

const menus = [
  ["Chrome", 142, 0.19], ["File", 84, -0.14], ["Edit", 89.5, -0.1], ["View", 98, -0.94], ["History", 128.5, -0.28],
  ["Bookmarks", 176, -0.48], ["Profiles", 132, -0.18], ["Tab", 85, -0.42], ["Window", 137, -0.92], ["Help", 60, -0.39],
];

const statuses = [
  [AirDrop, 66], [Volume, 69], [Battery, 87], [Wifi, 71], [UserCircle, 65], [Search, 62], [ControlCenter, 62], [Siri, 61],
];

const bookmarks = [
  ["tools", 136, 0.01], ["published", 192, -0.08], ["jobs", 128, -0.46], ["pega", 138, 0.07], ["plugins", 162, -0.28],
  ["CU", 116, 0.3], ["FENIX", 150, -0.58], ["course", 158, 0], ["in future", 160, -0.05],
];

const links = [["Home", 118, -1], ["Dashboard", 191, -0.72], ["Contact", 147, -0.6], ["Logout", 110, -0.85]];

const mainApps = [
  { Icon: Finder, dot: "#000" }, { Icon: Launchpad }, { Icon: Safari }, { Icon: Mail }, { Icon: Calendar }, { Icon: Notes },
  { Icon: Reminders }, { Icon: Maps }, { Icon: Messages, badge: "3" }, { Icon: FaceTime }, { Icon: Pages }, { Icon: Numbers },
  { Icon: Keynote }, { Icon: AppStore, badge: "6" }, { Icon: Settings, badge: "2" }, { Icon: () => <Missing>?</Missing> }, { Icon: QuickTime },
];

const recentApps = [
  { Icon: Slack, badge: "50", dot: "#1b0455" }, { Icon: Chrome, dot: "#1b0455" }, { Icon: Teams, badge: "1", dot: "#1b0455" },
  { Icon: () => <EclipseMark id="ecl1" width={114} height={104} />, dot: "#1b0455" }, { Icon: MySql, dot: "#12044f" },
];

const stacks = [{ Icon: Downloads }, { Icon: EditorThumb, dy: 12 }, { Icon: Trash, dy: -2 }];

const Tiles = ({ items }) =>
  items.map(({ Icon, badge, dot, dy }, i) => (
    <Tile key={i} $dy={dy}>
      <Icon />
      {badge && <Badge>{badge}</Badge>}
      {dot && <RunningDot $c={dot} />}
    </Tile>
  ));

export default function App() {
  return (
    <Desktop>
      <GlobalStyle />
      <MenuBar>
        <MenuGroup>
          <AppleSlot><FaApple /></AppleSlot>
          {menus.map(([label, w, ls], i) => (
            <MenuItem key={label} $w={w} $strong={i === 0}><Text $ls={ls}>{label}</Text></MenuItem>
          ))}
        </MenuGroup>
        <MenuGroup>
          {statuses.map(([Icon, w], i) => <StatusItem key={i} $w={w}><Icon /></StatusItem>)}
          <ClockItem><Text $ls={-0.36}>Tue 3 Jan</Text><Text $ls={0}>6:20 PM</Text></ClockItem>
        </MenuGroup>
      </MenuBar>
      <WindowGap />

      <BrowserWindow>
        <TabStrip>
          <TrafficLights><Light $c="#ec6a5e" /><Light $c="#f4be4f" /><Light $c="#61c554" /></TrafficLights>
          <Tab><Globe /><TabTitle><Text $ls={-0.28}>Admin Login</Text></TabTitle><Close /></Tab>
          <NewTab><Plus /></NewTab>
          <TabSearch><Chevron /></TabSearch>
        </TabStrip>
        <Toolbar>
          <NavButton $w={95} $inset={31}><ArrowLeft /></NavButton>
          <NavButton $w={64}><ArrowRight /></NavButton>
          <NavButton $w={58}><Reload /></NavButton>
          <Omnibox>
            <Info />
            <Url><Host $ls={-0.05}>localhost</Host><Text $ls={-0.12}>:8080/DevRevCarWash/search_place.jsp</Text></Url>
            <Star />
          </Omnibox>
          <SidePanelSlot><SidePanel /></SidePanelSlot>
          <IncognitoPill><IncognitoIcon /><Text $ls={-0.1}>Incognito</Text></IncognitoPill>
          <MoreSlot><Dots /></MoreSlot>
        </Toolbar>
        <BookmarksBar>
          {bookmarks.map(([label, w, ls]) => <Bookmark key={label} $w={w}><Folder /><Text $ls={ls}>{label}</Text></Bookmark>)}
        </BookmarksBar>
        <Page>
          <NavBar>
            <Brand><Text $ls={-1.72}>CU</Text></Brand>
            {links.map(([label, w, ls]) => <NavLink key={label} $w={w}><Text $ls={ls}>{label}</Text></NavLink>)}
          </NavBar>
          <Hero>
            <Card>
              <CardHeader><Text $ls={-0.88}>Search Place</Text></CardHeader>
              <Stray>&lt;</Stray>
              <CardBody>
                <Label><Text $ls={-0.75}>Place Name:</Text></Label>
                <Field><Text $ls={-0.7}>Enter Place Name</Text></Field>
                <SubmitButton><Text $ls={-0.45}>Submit</Text></SubmitButton>
              </CardBody>
            </Card>
          </Hero>
        </Page>
      </BrowserWindow>

      <DockBar>
        <Tiles items={mainApps} />
        <Separator />
        <Tiles items={recentApps} />
        <Separator />
        <Tiles items={stacks} />
      </DockBar>
    </Desktop>
  );
}
